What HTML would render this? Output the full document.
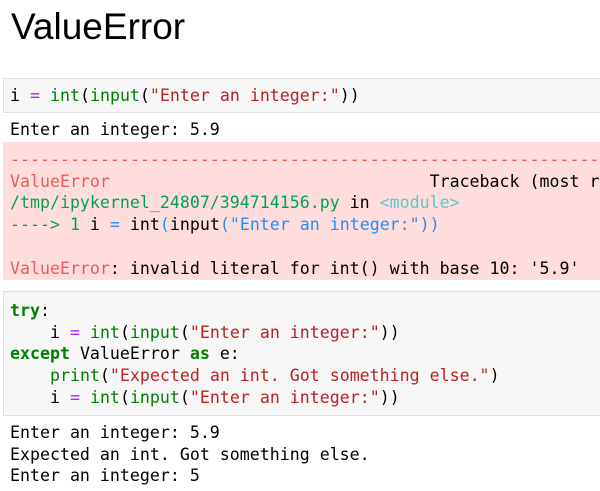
<!DOCTYPE html><html><head><style>
body{margin:0;width:600px;height:491px;overflow:hidden;background:#fff;font-family:"DejaVu Sans Mono",monospace;font-size:16.6px;color:#000}
h1{position:absolute;left:11px;top:6px;margin:0;font:37px "Liberation Sans",sans-serif;font-weight:normal}
.box{position:absolute;left:3px;right:0;white-space:pre;padding-left:6px;line-height:21.7px;overflow:hidden}
.in{background:#f7f7f7;border:1px solid #e0e0e0;border-right:none;box-sizing:border-box}
.k{color:#008000;font-weight:bold}.o{color:#aa22ff}.b{color:#008000}.s{color:#ba2121}
.r{color:#e75c58}.g{color:#00a250}.c{color:#60c6c8}.bl{color:#208ffb}
</style></head><body>
<h1>ValueError</h1>
<div class="box in" style="top:78px;height:35px;padding-top:6px">i <span class="o">=</span> <span class="b">int</span>(<span class="b">input</span>(<span class="s">"Enter an integer:"</span>))</div>
<div class="box" style="top:119px;padding-left:7px">Enter an integer: 5.9</div>
<div class="box" style="top:142px;height:138px;background:#fdd;padding-top:7px;padding-left:7px;box-sizing:border-box"><span class="r">-----------------------------------------------------------</span>
<span class="r">ValueError</span>                                Traceback (most recent call last)
<span class="g">/tmp/ipykernel_24807/394714156.py</span> in <span class="c">&lt;module&gt;</span>
<span class="g">----&gt; 1</span> i <span class="bl">=</span> int<span class="bl">(</span>input<span class="bl">("Enter an integer:"))</span>

<span class="r">ValueError</span>: invalid literal for int() with base 10: '5.9'</div>
<div class="box in" style="top:291px;height:125px;padding-top:8px"><span class="k">try</span>:
    i <span class="o">=</span> <span class="b">int</span>(<span class="b">input</span>(<span class="s">"Enter an integer:"</span>))
<span class="k">except</span> ValueError <span class="k">as</span> e:
    <span class="b">print</span>(<span class="s">"Expected an int. Got something else."</span>)
    i <span class="o">=</span> <span class="b">int</span>(<span class="b">input</span>(<span class="s">"Enter an integer:"</span>))</div>
<div class="box" style="top:422px;padding-left:7px">Enter an integer: 5.9
Expected an int. Got something else.
Enter an integer: 5</div>
</body></html>
